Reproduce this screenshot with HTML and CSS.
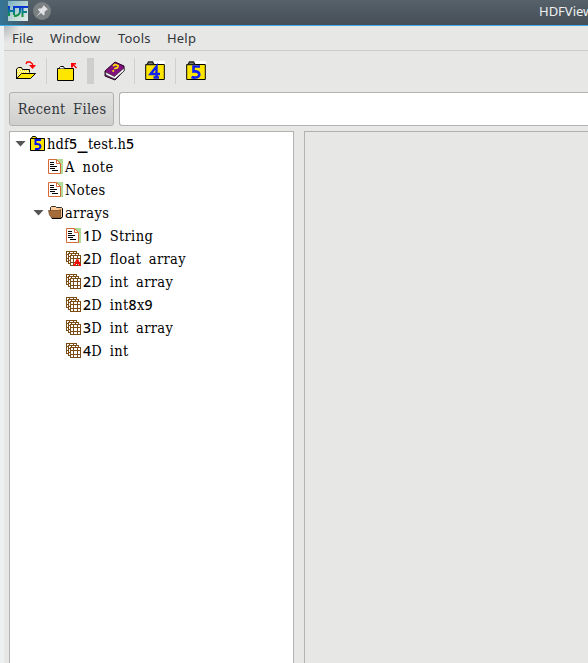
FILE: index.html
```html
<!DOCTYPE html>
<html lang="en">
<head>
<meta charset="utf-8">
<title>HDFView</title>
<link rel="stylesheet" href="styles.css">
</head>
<body>
<svg class="defs" width="0" height="0">
  <defs>
    <symbol id="text" viewBox="0 0 15 15">
      <path fill="#b0dc98" d="M8 0h7v15h-3V5L8 2z"/>
      <path fill="#fff" stroke="#d56a36" d="M.5.5h8l4 4v10H.5z"/>
      <path fill="none" stroke="#d56a36" d="M8.500.5v4h4"/>
      <path stroke="#000" d="M2 3.500h4M2 5.500h4M2 7.500h7M2 9.500h5M4 11.500h6" shape-rendering="crispEdges"/>
    </symbol>
    <symbol id="grid" viewBox="0 0 15 15">
      <g fill="#fff" stroke="#7b4c13" shape-rendering="crispEdges">
        <path d="M.5.5h10v10H.5zM3.500.5v10M7.500.5v10M.5 3.500h10M.5 7.500h10"/>
        <path d="M2.500 2.500h10v10h-10zM5.500 2.500v10M9.500 2.500v10M2.500 5.500h10M2.500 9.500h10"/>
        <path d="M4.500 4.500h10v10h-10zM7.500 4.500v10M11.500 4.500v10M4.500 7.500h10M4.500 11.500h10"/>
      </g>
    </symbol>
    <symbol id="folder" viewBox="0 0 15 13">
      <path fill="#ffcc99" stroke="#000" stroke-width=".8" d="M2.500 4V1.500l1-1h4l1 1h5l1 1v8l-1.500 2h-9z"/>
      <path fill="#a56b38" stroke="#5b3512" stroke-width=".6" d="M.5 4.500h10l2-1v8.700H4L1.500 9z"/>
      <path fill="none" stroke="#000" d="M4 12.500h9l1.500-2v-8"/>
    </symbol>
    <symbol id="five" viewBox="0 0 20 20">
      <path fill="#fff" d="M9 0h11v19H9z"/>
      <path fill="#ffe600" stroke="#000" d="M.7 3.500h18.600v15H.7z"/>
      <path fill="#999" stroke="#222" stroke-width="1.300" d="M2 3.500l1.500-2.500h4L9 3.500z"/>
      <path fill="none" stroke="#1020ee" stroke-width="2.600" d="M14 5.500H7.500v5c7-1 7.500 5.500 2.500 6q-3 .3-4.500-.5"/>
    </symbol>
    <symbol id="four" viewBox="0 0 20 20">
      <path fill="#fff" d="M9 0h11v19H9z"/>
      <path fill="#ffe600" stroke="#000" d="M.7 3.500h18.600v15H.7z"/>
      <path fill="#999" stroke="#222" stroke-width="1.300" d="M2 3.500l1.500-2.500h4L9 3.500z"/>
      <path fill="none" stroke="#1020ee" stroke-width="2.400" d="M11.500 17V5.500L5.500 13H15M8.500 16.500H14"/>
    </symbol>
  </defs>
</svg>
<header class="titlebar">
  <svg class="logo" width="20" height="20" viewBox="0 0 20 20">
    <defs><linearGradient id="bg" x2="1" y2="1"><stop stop-color="#79b1c3"/><stop offset=".6" stop-color="#c2dad5"/><stop offset="1" stop-color="#e2eeed"/></linearGradient>
    <linearGradient id="ink" gradientUnits="userSpaceOnUse" x1="0" x2="0" y1="5" y2="16"><stop stop-color="#0827dc"/><stop offset=".5" stop-color="#087e91"/><stop offset="1" stop-color="#169725"/></linearGradient></defs>
    <path fill="url(#bg)" d="M0 0h20v20H0z"/>
    <path fill="none" stroke="url(#ink)" stroke-width="2" d="M1 5v10M1 10h5M6 5v9M7 6h5v5q-1 4-6 4M20 6h-7M14.500 6v10M14 11h5"/>
  </svg>
  <svg class="pin" width="18" height="18" viewBox="0 0 18 18"><circle cx="9" cy="9" r="9" fill="#7b8082"/><path fill="#dfe1e2" d="M10.500 3l4.500 4.500-1.500.6-2 2 .1 2.400-1 1L8 11l-4.500 3.500L7 10 4.800 7.500l1-1 2.400.1 2-2z"/></svg>
  <span class="caption">HDFView</span>
</header>
<div class="window">
  <nav class="menu"><span class="m1">File</span><span class="m2">Window</span><span class="m3">Tools</span><span>Help</span></nav>
  <div class="toolbar">
    <svg class="open" width="22" height="20" viewBox="0 0 22 20">
      <path fill="#fff3a0" stroke="#000" d="M1.500 18V8l2-1.500h3l1 2h7v3"/><path stroke="#ffe600" stroke-dasharray="1 1" d="M3 9.500h11M2 11.500h9M3 13.500h4"/>
      <path fill="#ffe600" stroke="#000" d="M1.500 17.500l5-5h14l-5 5z"/>
      <path fill="none" stroke="red" stroke-width="1.300" d="M11 3l1-2h3l2.500 2v2"/><path fill="red" d="M14 4h7l-3.500 4z"/>
    </svg>
    <i class="sep"></i>
    <svg class="close" width="20" height="20" viewBox="0 0 20 20">
      <path fill="#ffe600" stroke="#000" d="M.5 5.500h16v12H.5z"/><path fill="#fff" stroke="#000" d="M2.500 5.500v-1l1-1h3l1 2"/>
      <path fill="red" d="M14 0h5v1.500h-2l3 3-1 1-3-3v2h-2z"/>
    </svg>
    <i class="handle"></i>
    <svg class="book" width="21" height="21" viewBox="0 0 21 21">
      <path fill="#81117f" stroke="#21001f" d="M1 10L11 1l9 4v5l-9 9L1 15z"/><path fill="#fff" stroke="#333" stroke-width=".7" d="M1.500 11l9 4.500L20 7v3l-9 8-9-4z"/><path fill="#81117f" d="M2 10l9-8 8 3.500-8.500 8.500z"/>
      <path fill="none" stroke="#ffe600" stroke-width="1.700" d="M9 5l2-1.500 3 1-.3 2-3.500 1.200M10 9.500l-1.500 1"/>
    </svg>
    <i class="sep s2"></i>
    <svg class="h4" width="20" height="20"><use href="#four"/></svg>
    <i class="sep s3"></i>
    <svg class="h5" width="20" height="20"><use href="#five"/></svg>
  </div>
  <div class="recent"><button>Recent Files</button><div class="field"></div></div>
  <main>
    <section class="tree">
      <div class="row root"><i class="arrow"></i><svg width="15" height="15" viewBox="0 0 15 15"><path fill="#ffe600" stroke="#000" d="M.5 2.500h14v12H.5zM1.500 2l1-1.500h3l1.500 2"/><path fill="none" stroke="#0010ee" stroke-width="2" d="M11 4H5.500v4c6.500-1 6 5 2 5H5"/></svg><span>hdf<b>5</b><span class="underscore">_</span>test.h<b>5</b></span></div>
      <div class="row level1"><svg width="15" height="15"><use href="#text"/></svg><span class="loose">A note</span></div>
      <div class="row level1"><svg width="15" height="15"><use href="#text"/></svg><span>Notes</span></div>
      <div class="row branch"><i class="arrow"></i><svg width="15" height="13"><use href="#folder"/></svg><span>arrays</span></div>
      <div class="row level2"><svg width="15" height="15"><use href="#text"/></svg><span><b>1</b>D String</span></div>
      <div class="row level2"><svg width="15" height="15"><use href="#grid"/><path fill="#fff" d="M9 8h4v2H9z"/><path fill="none" stroke="red" stroke-width="1.500" d="M7.500 14.200h2.500M12.500 14.200H15M8.700 14l2-5h1.100l2 5M10 12.300h3"/></svg><span><b>2</b>D float array</span></div>
      <div class="row level2"><svg width="15" height="15"><use href="#grid"/></svg><span><b>2</b>D int array</span></div>
      <div class="row level2"><svg width="15" height="15"><use href="#grid"/></svg><span><b>2</b>D int<b>8</b>x<b>9</b></span></div>
      <div class="row level2"><svg width="15" height="15"><use href="#grid"/></svg><span><b>3</b>D int array</span></div>
      <div class="row level2"><svg width="15" height="15"><use href="#grid"/></svg><span><b>4</b>D int</span></div>
    </section>
    <section class="workspace"></section>
  </main>
</div>
</body>
</html>
```
FILE: styles.css
```css
* { box-sizing: border-box; }
body { margin: 0; height: 663px; overflow: hidden; background: #eff0f1; font-family: "Noto Sans", sans-serif; }
.defs { position: absolute; }
svg, i { flex: none; }
.titlebar { height: 26px; display: flex; align-items: flex-start; background: linear-gradient(90deg, #347696, #34769600 32px), linear-gradient(#56616a, #454e56); border-bottom: 1px solid #3daee9; color: #eff0f1; }
.logo { margin: 1px 5px 0 8px; }
.pin { margin-top: 2px; }
.caption { margin-left: 488px; font-size: 13px; line-height: 23px; white-space: nowrap; }
.window { margin-left: 4px; height: 637px; background: radial-gradient(circle at 0 0, #b4b9bc, #e7e7e500 16px), #e7e7e5; display: flex; flex-direction: column; }
.menu { height: 25px; flex: none; display: flex; padding-left: 8px; border-bottom: 1px solid #cbcbca; font-size: 13px; line-height: 24px; color: #31363b; letter-spacing: .2px; }
.m1 { width: 38px; }
.m2 { width: 68px; }
.m3 { width: 49px; }
.toolbar { height: 41px; flex: none; display: flex; align-items: flex-start; padding-top: 7px; }
.open { margin: 3px 9px 0 11px; }
.sep { width: 1px; height: 26px; background: #d0d0ce; }
.close { margin: 5px 10px 0; }
.handle { width: 7px; height: 26px; background: #cfcfcd; }
.book { margin: 3px 9px 0 10px; }
.h4 { margin: 3px 10px 0; }
.h5 { margin: 3px 0 0 10px; }
.recent { height: 34px; margin-left: 5px; flex: none; display: flex; gap: 5px; }
button { width: 105px; padding: 0 0 0 1px; border: 1px solid #b2b2b0; border-radius: 3px; background: linear-gradient(#e2e2e1, #cfcfcd); color: #31363b; font: 14.500px "DejaVu Serif Condensed", "DejaVu Serif", serif; font-stretch: condensed; word-spacing: 3px; letter-spacing: .3px; white-space: nowrap; }
.field { flex: 1; border: 1px solid #b2b2b0; border-right: 0; border-radius: 3px 0 0 3px; background: #fff; }
main { flex: 1; display: flex; gap: 10px; margin: 5px 0 0 5px; }
.tree { width: 285px; flex: none; background: #fff; border: 1px solid #b2b2b0; border-bottom: 0; }
.workspace { flex: 1; border: 1px solid #b2b2b0; border-width: 1px 0 0 1px; }
.row { height: 23px; display: flex; align-items: center; white-space: nowrap; color: #000; font: 14.500px/23px "DejaVu Serif Condensed", "DejaVu Serif", serif; font-stretch: condensed; word-spacing: 3px; letter-spacing: .35px; }
.row > span { padding-top: 2px; line-height: 21px; }
.row svg { margin-right: 2px; }
.row b { font: 500 14px/1 "Noto Sans", sans-serif; }
.loose { letter-spacing: .5px; }
.underscore { display: inline-block; width: 11px; height: 12px; line-height: 12px; font-weight: bold; font-size: 17px; text-align: center; transform: scaleX(1.3); }
.root { padding-left: 5px; letter-spacing: .1px; }
.branch { padding-left: 23px; }
.level1 { padding-left: 38px; }
.level2 { padding-left: 56px; }
.arrow { width: 11px; height: 6px; margin-right: 4px; background: #555; clip-path: polygon(0 0, 100% 0, 50% 100%); }
```
